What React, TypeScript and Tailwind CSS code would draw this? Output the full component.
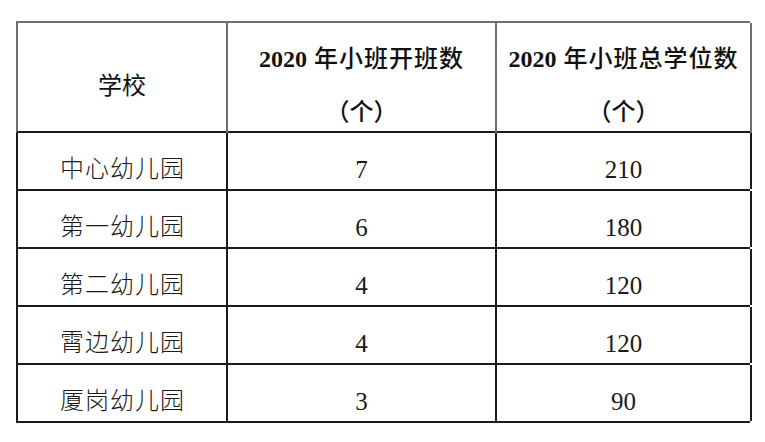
import React from "react";

const rows = [
  { name: "中心幼儿园", a: "7", b: "210" },
  { name: "第一幼儿园", a: "6", b: "180" },
  { name: "第二幼儿园", a: "4", b: "120" },
  { name: "霄边幼儿园", a: "4", b: "120" },
  { name: "厦岗幼儿园", a: "3", b: "90" },
];

const font = { fontFamily: '"Liberation Serif", "Noto Sans CJK SC", serif' };

function HeaderTitle({ rest }: { rest: string }) {
  return (
    <div className="flex flex-col items-center pt-[10px] text-[24px] leading-[53px] text-[#111]">
      <div className="whitespace-nowrap">
        <span className="font-bold">2020</span>
        <span className="font-medium tracking-[1px]"> {rest}</span>
      </div>
      <div className="font-medium">（个）</div>
    </div>
  );
}

export default function App() {
  return (
    <div className="w-[765px] h-[442px] bg-white pt-[21px] pl-[16px]" style={font}>
      <div className="w-[734px]">
        {/* header */}
        <div className="grid grid-cols-[210px_269px_255px] h-[112px] border-t-2 border-l-2 border-[#6f6f6f] border-b-2 border-b-[#1c1c1c]">
          <div className="border-r-2 border-[#6f6f6f] flex justify-center pt-[37px]">
            <span className="text-[24px] leading-[53px] text-[#111]">学校</span>
          </div>
          <div className="border-r-2 border-[#6f6f6f]">
            <HeaderTitle rest="年小班开班数" />
          </div>
          <div className="border-r-2 border-[#6f6f6f]">
            <HeaderTitle rest="年小班总学位数" />
          </div>
        </div>
        {/* body */}
        {rows.map((r) => (
          <div
            key={r.name}
            className="grid grid-cols-[210px_269px_255px] h-[58px] border-l-2 border-b-2 border-[#1c1c1c] text-[#1a1a1a]"
          >
            <div className="border-r-2 border-[#1c1c1c] flex items-center justify-center pt-[16px] pl-[1px]">
              <span className="text-[24px] leading-none tracking-[1px] font-light">{r.name}</span>
            </div>
            <div className="border-r-2 border-[#1c1c1c] flex items-center justify-center pt-[16px]">
              <span className="text-[25px] leading-none">{r.a}</span>
            </div>
            <div className="border-r-2 border-[#1c1c1c] flex items-center justify-center pt-[16px]">
              <span className="text-[25px] leading-none">{r.b}</span>
            </div>
          </div>
        ))}
      </div>
    </div>
  );
}
